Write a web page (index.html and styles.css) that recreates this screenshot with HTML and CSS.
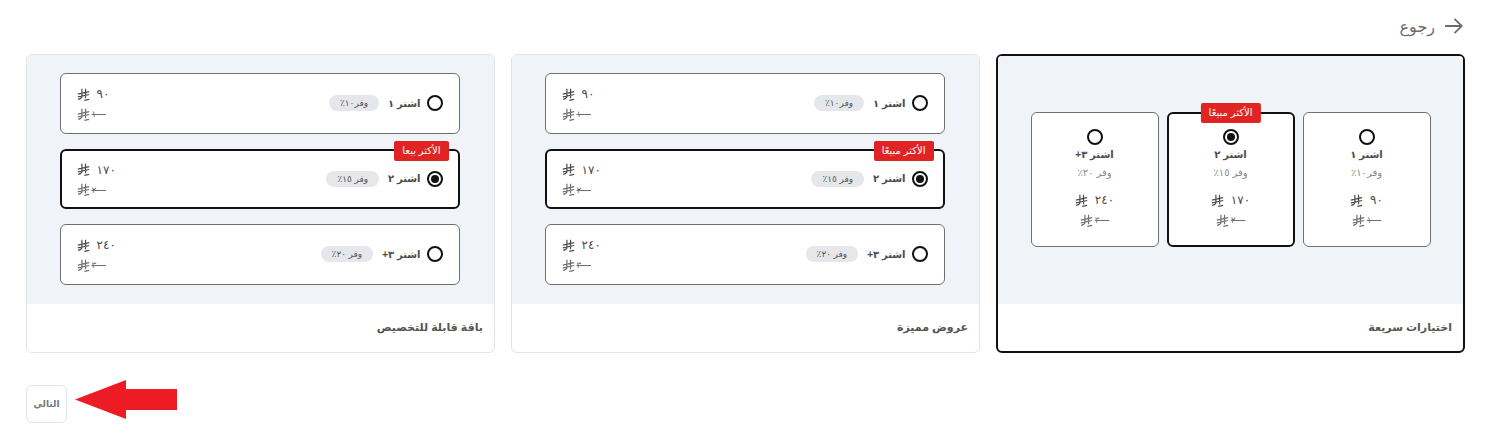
FILE: index.html
```html
<!DOCTYPE html>
<html lang="ar" dir="rtl">
<head>
    <meta charset="UTF-8">
    <title>عروض</title>
    <link rel="stylesheet" href="styles.css">
</head>
<body>
    <svg class="defs" width="0" height="0" aria-hidden="true">
        <symbol id="riyal" viewBox="0 0 16 16">
            <path d="M6 1V10.500Q6 13 1.500 14M10.500 1V12.500M1 7.500L15 4.500M1 11L15 8M9 15.200L15 13.900" fill="none" stroke="currentColor" stroke-width="1.500"/>
        </symbol>
    </svg>

    <div class="page">
        <a class="back" href="#">
            <svg class="back_icon" viewBox="0 0 18 18"><path d="M1 9h15M9.500 2.500L16 9l-6.500 6.500" fill="none" stroke="currentColor" stroke-width="1.600"/></svg>
            <span>رجوع</span>
        </a>

        <div class="cards">
            <div class="card card_active">
                <div class="preview">
                    <div class="grid_opts">
                        <div class="cell">
                            <span class="radio"></span>
                            <b class="opt_name">اشتر ١</b>
                            <span class="cell_save">وفر١٠٪</span>
                            <span class="price"><span>٩٠</span><svg class="sar"><use href="#riyal"/></svg></span>
                            <span class="old"><s>١٠٠</s><svg class="sar"><use href="#riyal"/></svg></span>
                        </div>
                        <div class="cell cell_on">
                            <span class="tag tag_mid">الأكثر مبيعًا</span>
                            <span class="radio radio_on"></span>
                            <b class="opt_name">اشتر ٢</b>
                            <span class="cell_save">وفر ١٥٪</span>
                            <span class="price"><span>١٧٠</span><svg class="sar"><use href="#riyal"/></svg></span>
                            <span class="old"><s>٢٠٠</s><svg class="sar"><use href="#riyal"/></svg></span>
                        </div>
                        <div class="cell">
                            <span class="radio"></span>
                            <b class="opt_name">اشتر ٣+</b>
                            <span class="cell_save">وفر ٢٠٪</span>
                            <span class="price"><span>٢٤٠</span><svg class="sar"><use href="#riyal"/></svg></span>
                            <span class="old"><s>٣٠٠</s><svg class="sar"><use href="#riyal"/></svg></span>
                        </div>
                    </div>
                </div>
                <div class="card_title">اختيارات سريعة</div>
            </div>

            <div class="card">
                <div class="preview">
                    <div class="list_opts">
                        <div class="row">
                            <span class="radio"></span>
                            <b class="opt_name">اشتر ١</b>
                            <span class="pill">وفر١٠٪</span>
                            <div class="row_prices">
                                <span class="price"><span>٩٠</span><svg class="sar"><use href="#riyal"/></svg></span>
                                <span class="old"><s>١٠٠</s><svg class="sar"><use href="#riyal"/></svg></span>
                            </div>
                        </div>
                        <div class="row row_on">
                            <span class="tag">الأكثر مبيعًا</span>
                            <span class="radio radio_on"></span>
                            <b class="opt_name">اشتر ٢</b>
                            <span class="pill">وفر ١٥٪</span>
                            <div class="row_prices">
                                <span class="price"><span>١٧٠</span><svg class="sar"><use href="#riyal"/></svg></span>
                                <span class="old"><s>٢٠٠</s><svg class="sar"><use href="#riyal"/></svg></span>
                            </div>
                        </div>
                        <div class="row">
                            <span class="radio"></span>
                            <b class="opt_name">اشتر ٣+</b>
                            <span class="pill">وفر ٢٠٪</span>
                            <div class="row_prices">
                                <span class="price"><span>٢٤٠</span><svg class="sar"><use href="#riyal"/></svg></span>
                                <span class="old"><s>٣٠٠</s><svg class="sar"><use href="#riyal"/></svg></span>
                            </div>
                        </div>
                    </div>
                </div>
                <div class="card_title">عروض مميزة</div>
            </div>

            <div class="card">
                <div class="preview">
                    <div class="list_opts">
                        <div class="row">
                            <span class="radio"></span>
                            <b class="opt_name">اشتر ١</b>
                            <span class="pill">وفر١٠٪</span>
                            <div class="row_prices">
                                <span class="price"><span>٩٠</span><svg class="sar"><use href="#riyal"/></svg></span>
                                <span class="old"><s>١٠٠</s><svg class="sar"><use href="#riyal"/></svg></span>
                            </div>
                        </div>
                        <div class="row row_on">
                            <span class="tag">الأكثر بيعا</span>
                            <span class="radio radio_on"></span>
                            <b class="opt_name">اشتر ٢</b>
                            <span class="pill">وفر ١٥٪</span>
                            <div class="row_prices">
                                <span class="price"><span>١٧٠</span><svg class="sar"><use href="#riyal"/></svg></span>
                                <span class="old"><s>٢٠٠</s><svg class="sar"><use href="#riyal"/></svg></span>
                            </div>
                        </div>
                        <div class="row">
                            <span class="radio"></span>
                            <b class="opt_name">اشتر ٣+</b>
                            <span class="pill">وفر ٢٠٪</span>
                            <div class="row_prices">
                                <span class="price"><span>٢٤٠</span><svg class="sar"><use href="#riyal"/></svg></span>
                                <span class="old"><s>٣٠٠</s><svg class="sar"><use href="#riyal"/></svg></span>
                            </div>
                        </div>
                    </div>
                </div>
                <div class="card_title">باقة قابلة للتخصيص</div>
            </div>
        </div>

        <div class="footer">
            <button class="next">التالي</button>
        </div>
    </div>

    <!-- annotation drawn over the page -->
    <svg class="red_arrow" viewBox="0 0 102 39"><polygon points="0,19.500 51,0 51,9 102,9 102,30 51,30 51,39" fill="#ed1c24"/></svg>
</body>
</html>
```

FILE: styles.css
```css
* {
    box-sizing: border-box;
}

body {
    margin: 0;
    background: #fff;
    color: #4b4b4b;
    font-family: "Liberation Sans", "DejaVu Sans", sans-serif;
}

.defs {
    position: absolute;
}

.page {
    padding: 16px 23px 0 21px;
    margin-left: 5px;
}

.back {
    display: flex;
    align-items: center;
    gap: 9px;
    height: 20px;
    margin-bottom: 18px;
    padding-right: 1px;
    color: #6b6b6b;
    font-size: 16px;
    text-decoration: none;
}

.back_icon {
    width: 20px;
    height: 20px;
}

.cards {
    display: grid;
    grid-template-columns: repeat(3, 1fr);
    gap: 16px;
}

.card {
    height: 299px;
    border: 1px solid #e2e4e9;
    border-radius: 6px;
    overflow: hidden;
    background: #fff;
}

.card_active {
    border: 2px solid #111;
}

.preview {
    display: flex;
    align-items: center;
    justify-content: center;
    height: 249px;
    background: #f0f3f8;
}

.card_active .preview {
    height: 248px;
}

.card_title {
    padding: 16px 11px;
    color: #555;
    font-size: 11px;
    line-height: 14px;
    font-weight: bold;
}

.grid_opts {
    display: grid;
    grid-template-columns: repeat(3, 128px);
    gap: 8px;
    margin-bottom: 1px;
}

.cell {
    position: relative;
    display: flex;
    flex-direction: column;
    align-items: center;
    height: 135px;
    padding-top: 16px;
    border: 1px solid #6f6f6f;
    border-radius: 6px;
    background: #fff;
}

.cell_on {
    border: 2px solid #111;
    padding-top: 15px;
}

.cell_save {
    margin: 7px 0 14px;
    color: #8a8a8a;
    font-size: 10px;
}

.list_opts {
    display: flex;
    flex-direction: column;
    gap: 15px;
    width: 400px;
    margin: 0 2px 2px 0;
}

.row {
    position: relative;
    display: flex;
    align-items: center;
    height: 61px;
    padding: 0 16px;
    border: 1px solid #6f6f6f;
    border-radius: 6px;
    background: #fff;
}

.row_on {
    height: 60px;
    border: 2px solid #111;
    padding: 0 15px;
}

.radio {
    flex: none;
    width: 16px;
    height: 16px;
    border: 2px solid #111;
    border-radius: 50%;
    background: #fff;
}

.radio_on {
    position: relative;
}

.radio_on::after {
    content: "";
    position: absolute;
    top: 2px;
    left: 2px;
    width: 8px;
    height: 8px;
    border-radius: 50%;
    background: #111;
}

.opt_name {
    color: #4b4b4b;
    font-size: 10px;
    white-space: nowrap;
}

.cell .opt_name {
    margin-top: 4px;
}

.row .opt_name {
    margin: 0 6px 0 9px;
}

.pill {
    padding: 1px 11px;
    border-radius: 8px;
    background: #e5e7eb;
    color: #555;
    font-size: 9px;
    line-height: 14px;
    white-space: nowrap;
}

.row_prices {
    display: flex;
    flex-direction: column;
    gap: 4px;
    align-items: flex-end;
    margin: 2px auto 0 0;
}

.price,
.old {
    display: flex;
    align-items: center;
    gap: 7px;
    direction: rtl;
    color: #4b4b4b;
    font-size: 12px;
    line-height: 16px;
    letter-spacing: 4px;
}

.old {
    gap: 2px;
    margin-top: 4px;
    color: #6f6f6f;
    font-size: 9px;
    letter-spacing: 4px;
}

.row_prices .old {
    margin-top: 0;
}

.sar {
    width: 13px;
    height: 13px;
}

.tag {
    position: absolute;
    top: -10px;
    right: 9px;
    padding: 0 8px;
    border-radius: 2px;
    background: #e02424;
    color: #fff;
    font-size: 10px;
    line-height: 20px;
    white-space: nowrap;
}

.tag_mid {
    top: -11px;
    right: 50%;
    transform: translateX(50%);
}

.footer {
    display: flex;
    justify-content: flex-end;
    margin-top: 32px;
}

.next {
    width: 41px;
    height: 38px;
    padding: 0;
    border: 1px solid #e2e4e9;
    border-radius: 6px;
    background: #fff;
    color: #777;
    font-family: inherit;
    font-size: 9px;
    font-weight: bold;
}

.red_arrow {
    position: absolute;
    top: 380px;
    left: 75px;
    width: 102px;
    height: 39px;
}
```
